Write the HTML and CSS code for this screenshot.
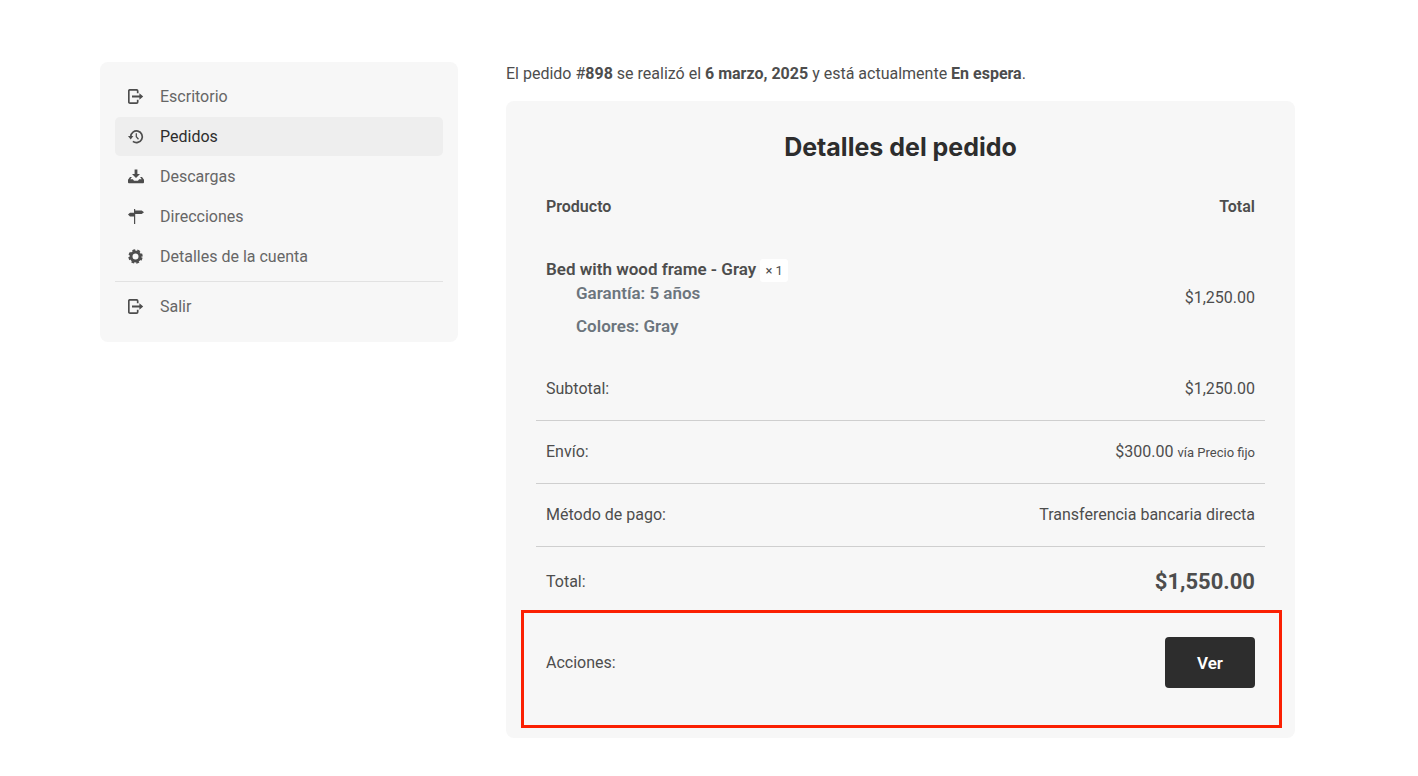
FILE: index.html
```html
<!DOCTYPE html>
<html lang="es">
<head>
<meta charset="utf-8">
<meta name="viewport" content="width=device-width, initial-scale=1">
<title>Detalles del pedido</title>
<link rel="stylesheet" href="styles.css">
</head>
<body>
<svg class="sprite" aria-hidden="true">
  <symbol id="icon-exit" viewBox="0 0 16 16">
    <path d="M9.700 4.200V2a1.200 1.200 0 0 0-1.200-1.200H2A1.200 1.200 0 0 0 .8 2v11A1.200 1.200 0 0 0 2 14.200h6.500A1.200 1.200 0 0 0 9.700 13v-2.200" fill="none" stroke="currentColor" stroke-width="1.700"/>
    <path d="M4 6.400h7.400V4.300L15.200 7.500l-3.800 3.200V8.600H4z"/>
  </symbol>
  <symbol id="icon-history" viewBox="0 0 16 16">
    <path d="M2.700 7.500A5.800 5.800 0 1 1 4.900 12.300" fill="none" stroke="currentColor" stroke-width="1.700"/>
    <path d="M0 7h5.400L2.700 10.400z"/>
    <path d="M8.300 4.200v3.600l2.200 2.400" fill="none" stroke="currentColor" stroke-width="1.300"/>
  </symbol>
  <symbol id="icon-download" viewBox="0 0 16 16">
    <path d="M6.600.5h2.800V5H12L8 9 4 5h2.600z"/>
    <path d="M2 8h1.900l-1.600 2.200h2.600L6 11.700h4l1.100-1.500h2.600L12.100 8H14l2 2.700v2.500q0 1-.9 1H.9q-.9 0-.9-1v-2.500z"/>
  </symbol>
  <symbol id="icon-signpost" viewBox="0 0 16 16">
    <path d="M6 0h1.200v15H6z"/>
    <path d="M6.800 1.500h6.900L16 3.300l-2.300 1.800H6.800zM6.500 3.700H2L0 5.600l2 1.900h4.500z"/>
  </symbol>
  <symbol id="icon-gear" viewBox="0 0 16 16">
    <circle cx="7.500" cy="7.500" r="4.500" fill="none" stroke="currentColor" stroke-width="3"/>
    <circle cx="7.500" cy="7.500" r="6.300" fill="none" stroke="currentColor" stroke-width="1.800" stroke-dasharray="2.800 2.148" stroke-dashoffset="-1.074"/>
  </symbol>
</svg>

<div class="page">
  <nav class="account-nav" aria-label="Mi cuenta">
    <ul class="nav-list">
      <li><a class="nav-link" href="#"><svg class="icon"><use href="#icon-exit"/></svg>Escritorio</a></li>
      <li><a class="nav-link is-active" href="#" aria-current="page"><svg class="icon"><use href="#icon-history"/></svg>Pedidos</a></li>
      <li><a class="nav-link" href="#"><svg class="icon"><use href="#icon-download"/></svg>Descargas</a></li>
      <li><a class="nav-link" href="#"><svg class="icon"><use href="#icon-signpost"/></svg>Direcciones</a></li>
      <li><a class="nav-link" href="#"><svg class="icon"><use href="#icon-gear"/></svg>Detalles de la cuenta</a></li>
      <li class="nav-exit"><a class="nav-link" href="#"><svg class="icon"><use href="#icon-exit"/></svg>Salir</a></li>
    </ul>
  </nav>

  <main class="content">
    <p class="status">El pedido #<strong>898</strong> se realizó el <strong>6 marzo, 2025</strong> y está actualmente <strong>En espera</strong>.</p>
    <section class="order">
      <h2 class="order-title">Detalles del pedido</h2>
      <table class="order-table">
        <thead>
          <tr><th scope="col">Producto</th><th scope="col" class="amount">Total</th></tr>
        </thead>
        <tbody>
          <tr>
            <td class="product">
              <div class="product-name">Bed with wood frame - Gray <span class="quantity">× 1</span></div>
              <ul class="product-meta">
                <li>Garantía: 5 años</li>
                <li>Colores: Gray</li>
              </ul>
            </td>
            <td class="amount">$1,250.00</td>
          </tr>
        </tbody>
        <tfoot>
          <tr class="ruled"><th scope="row">Subtotal:</th><td class="amount">$1,250.00</td></tr>
          <tr class="ruled"><th scope="row">Envío:</th><td class="amount">$300.00 <small class="shipping">vía Precio fijo</small></td></tr>
          <tr class="ruled"><th scope="row">Método de pago:</th><td class="amount">Transferencia bancaria directa</td></tr>
          <tr><th scope="row">Total:</th><td class="amount grand-total">$1,550.00</td></tr>
          <tr><th scope="row">Acciones:</th><td class="amount actions"><button class="button" type="button">Ver</button></td></tr>
        </tfoot>
      </table>
      <div class="highlight"></div>
    </section>
  </main>
</div>
</body>
</html>
```
FILE: styles.css
```css
* {
  box-sizing: border-box;
}

body {
  margin: 0;
  background: #fff;
  color: #4d4d4d;
  font: 16px/24px Roboto, "Liberation Sans", sans-serif;
}

ul {
  margin: 0;
  padding: 0;
  list-style: none;
}

.sprite {
  position: absolute;
  width: 0;
  height: 0;
}

.page {
  display: grid;
  grid-template-columns: minmax(240px, 358fr) minmax(0, 789fr);
  align-items: start;
  gap: 48px;
  padding: 62px 123px 38px 100px;
}

.account-nav {
  padding: 15px 15px 16px;
  border-radius: 8px;
  background: #f7f7f7;
}

.nav-list {
  display: grid;
  gap: 1px;
}

.nav-link {
  display: flex;
  align-items: center;
  gap: 16px;
  height: 39px;
  padding: 0 13px;
  border-radius: 5px;
  color: #666;
  text-decoration: none;
}

.nav-link.is-active {
  background: #eee;
  color: #2d2d2d;
}

.nav-exit {
  margin-top: 4px;
  padding-top: 5px;
  border-top: 1px solid #e2e2e2;
}

.icon {
  flex: none;
  width: 16px;
  height: 16px;
  color: #4d4d4d;
  fill: currentColor;
}

.status {
  margin: 0 0 15px;
}

strong {
  font-weight: 700;
}

.order {
  position: relative;
  padding: 30px;
  border-radius: 8px;
  background: #f7f7f7;
}

.order-title {
  margin: 0 0 12px;
  color: #2d2d2d;
  font: 700 25px/32px Inter, "Open Sans", sans-serif;
  text-align: center;
}

.order-table {
  width: 100%;
  border-collapse: separate;
  border-spacing: 0;
}

.order-table th,
.order-table td {
  padding: 19px 10px;
  font-weight: 400;
  text-align: left;
  vertical-align: middle;
}

.order-table thead th {
  padding-top: 20px;
  font-weight: 600;
}

.order-table .ruled > * {
  border-bottom: 1px solid #cfcfcf;
}

.order-table .amount {
  text-align: right;
}

.order-table .product {
  padding-bottom: 20px;
  font-size: 17px;
  font-weight: 600;
}

.quantity {
  padding: 4px 5px;
  border-radius: 3px;
  background: #fff;
  font-size: 13px;
  font-weight: 400;
  line-height: 1;
}

.product-meta {
  display: grid;
  gap: 9px;
  padding-left: 30px;
  color: #6c757d;
}

.shipping {
  font-size: 13px;
  line-height: 1;
}

.order-table .grand-total {
  font-size: 22px;
  font-weight: 700;
  line-height: 32px;
}

.order-table .actions {
  padding: 20px 10px;
}

.button {
  display: inline-block;
  padding: 14px 32px 12px;
  border: 0;
  border-radius: 4px;
  background: #2d2d2d;
  color: #fff;
  font: 600 17px/25px Roboto, sans-serif;
  vertical-align: top;
}

.highlight {
  position: absolute;
  right: 13px;
  bottom: 10px;
  left: 15px;
  height: 118px;
  border: 3px solid #fb2003;
  pointer-events: none;
}
```
